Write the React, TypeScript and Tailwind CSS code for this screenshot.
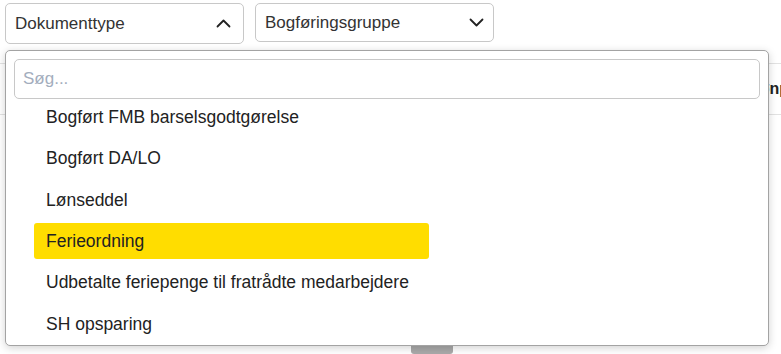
import React, { useState } from "react";

const documentTypes = [
  "Bogført FMB barselsgodtgørelse",
  "Bogført DA/LO",
  "Lønseddel",
  "Ferieordning",
  "Udbetalte feriepenge til fratrådte medarbejdere",
  "SH opsparing",
];

function Chevron({ up }: { up?: boolean }) {
  return (
    <svg width="15" height="9" viewBox="0 0 15 9" fill="none" className="shrink-0">
      <path
        d={up ? "M1.5 7.5 L7.5 1.5 L13.5 7.5" : "M1.5 1.5 L7.5 7.5 L13.5 1.5"}
        stroke="#222"
        strokeWidth="1.8"
        strokeLinecap="round"
        strokeLinejoin="round"
      />
    </svg>
  );
}

export default function App() {
  const [active, setActive] = useState("Ferieordning");
  const [query, setQuery] = useState("");

  return (
    <div className="relative w-[781px] h-[354px] overflow-hidden bg-white font-['Liberation_Sans',Arial,sans-serif] text-[#222]">
      {/* filters */}
      <div className="flex items-start pl-[5px] pt-[3px] gap-[11px]">
        <button className="w-[239px] h-[41px] flex items-center justify-between pl-[9px] pr-[12px] border border-[#c8c8c8] rounded-[5px] bg-white text-[17px] text-[#333]">
          <span>Dokumenttype</span>
          <Chevron up />
        </button>
        <button className="w-[239px] h-[39px] flex items-center justify-between pl-[9px] pr-[9px] border border-[#c8c8c8] rounded-[5px] bg-white text-[17px] text-[#333]">
          <span>Bogføringsgruppe</span>
          <Chevron />
        </button>
      </div>

      {/* table header behind the menu */}
      <div className="mt-[19px] h-[52px] border-t border-b border-[#e2e2e2] flex items-center">
        <span className="ml-[750px] text-[16px] font-bold whitespace-nowrap">Lønp</span>
      </div>

      <div className="mt-[225px] flex justify-center pl-[82px]">
        <div className="w-[42px] h-[14px] bg-[#a9a9a9] rounded-[3px] flex justify-center">
          <div className="w-[12px] h-[4px] bg-white rounded-b-[3px]" />
        </div>
      </div>

      {/* dropdown */}
      <div className="absolute top-[50px] left-[5px] w-[764px] h-[296px] bg-white border border-[#a3a3a3] rounded-[5px] shadow-[0_2px_8px_rgba(0,0,0,0.18)] px-[8px] pt-[8px]">
        <input
          value={query}
          onChange={(e) => setQuery(e.target.value)}
          placeholder="Søg..."
          className="w-full h-[40px] px-[8px] border border-[#c8c8c8] rounded-[5px] text-[17px] placeholder:text-[#a3adbd] outline-none"
        />
        <ul className="ml-[20px] w-[395px]">
          {documentTypes.map((t) => (
            <li
              key={t}
              onClick={() => setActive(t)}
              className={
                t === active
                  ? "h-[36px] mb-[5.4px] flex items-center px-[12px] rounded-[3px] bg-[#ffdd00] text-[17.5px] cursor-pointer"
                  : "h-[36px] mb-[5.4px] flex items-center px-[12px] rounded-[3px] text-[17.5px] cursor-pointer"
              }
            >
              {t}
            </li>
          ))}
        </ul>
      </div>
    </div>
  );
}
